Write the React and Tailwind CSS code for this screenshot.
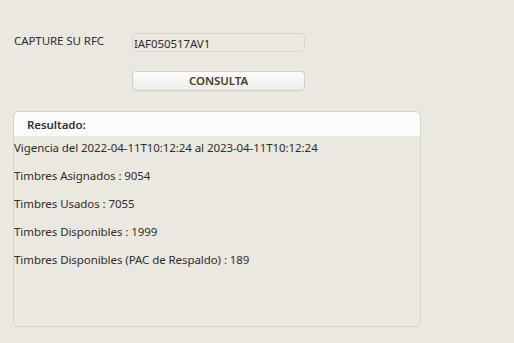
const lines = [
  "Vigencia del 2022-04-11T10:12:24 al 2023-04-11T10:12:24",
  "Timbres Asignados : 9054",
  "Timbres Usados : 7055",
  "Timbres Disponibles : 1999",
  "Timbres Disponibles (PAC de Respaldo) : 189",
];

export default function App() {
  return (
    <div
      className="w-[514px] h-[343px] bg-[#ebe8df] text-[#2e2e2e] text-[11.5px] tracking-[-0.07px] overflow-hidden"
      style={{ fontFamily: '"Noto Sans", "Open Sans", sans-serif' }}
    >
      <div className="flex pt-[33px] pl-[14px]">
        <label className="w-[118px] pt-[1px] leading-[14px]">CAPTURE SU RFC</label>
        <div className="w-[173px] h-[19px] rounded-[4px] border border-[#d9d6cd] bg-[#ece9e1] pl-[1px] leading-[19px]">
          IAF050517AV1
        </div>
      </div>

      <div className="pl-[132px] pt-[19px]">
        <button className="w-[173px] h-[20px] rounded-[4px] border border-[#cfcdc8] bg-gradient-to-b from-[#fdfdfd] to-[#ebebeb] text-[#4a3b24] font-semibold leading-[18px]">
          CONSULTA
        </button>
      </div>

      <div className="ml-[13px] mt-[20px] w-[408px] h-[216px] rounded-[5px] border border-[#d6d3ca]">
        <div className="h-[24px] rounded-t-[5px] bg-[#fbfbfb] pl-[13px] font-semibold leading-[26px] text-[#333]">
          Resultado:
        </div>
        <div className="flex flex-col gap-[12px] pt-[4px]">
          {lines.map((l) => (
            <div key={l} className="leading-[16px]">
              {l}
            </div>
          ))}
        </div>
      </div>
    </div>
  );
}
